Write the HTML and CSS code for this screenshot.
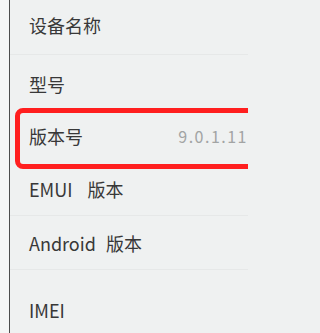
FILE: index.html
```html
<!DOCTYPE html>
<html lang="zh-CN">
<head>
<meta charset="utf-8">
<title>关于手机</title>
<link rel="stylesheet" href="styles.css">
</head>
<body>
<div class="screen">
  <div class="edge"></div>
  <div class="list">
    <div class="row row-1"><span class="label">设备名称</span></div>
    <div class="row row-2"><span class="label">型号</span></div>
    <div class="row row-3">
      <span class="label">版本号</span>
      <span class="value">9.0.1.11</span>
      <div class="highlight"></div>
    </div>
    <div class="row row-4"><span class="label">EMUI<span class="gap-wide"></span>版本</span></div>
    <div class="row row-5"><span class="label">Android<span class="gap"></span>版本</span></div>
    <div class="row row-6"><span class="label">IMEI</span></div>
  </div>
</div>
</body>
</html>
```

FILE: styles.css
```css
html, body {
  margin: 0;
  padding: 0;
  background: #eff1f1;
}

.screen {
  display: flex;
  width: 248px;
  height: 333px;
  overflow: hidden;
  font-family: "Noto Sans CJK SC", "Noto Sans", sans-serif;
  color: #383838;
  background: #eff1f1;
}

.edge {
  flex: 0 0 9px;
  background: #f5f6f6;
  border-right: 1px solid #4d4d4d;
}

.list {
  flex: 0 0 238px;
  display: flex;
  flex-direction: column;
}

.row {
  position: relative;
  display: flex;
  align-items: center;
  padding-left: 19px;
  padding-right: 0;
  box-sizing: border-box;
  border-bottom: 1px solid #e6e8e8;
}

.label {
  font-size: 18px;
  line-height: 24px;
  white-space: nowrap;
  display: flex;
  align-items: center;
}

.gap { display: inline-block; width: 10px; }
.gap-wide { display: inline-block; width: 15px; }

.row-1 { height: 55px; padding-bottom: 5px; }
.row-2 { height: 54px; padding-top: 4px; border-bottom-color: transparent; }
.row-3 { height: 54px; padding-top: 1px; border-bottom-color: transparent; }
.row-4 { height: 53px; }
.row-5 { height: 54px; }
.row-6 { flex: 1; align-items: flex-start; padding-top: 28px; border-bottom: none; }

.value {
  margin-left: auto;
  font-size: 16px;
  line-height: 24px;
  letter-spacing: 1.5px;
  color: #a2a4a4;
  white-space: nowrap;
}

.highlight {
  position: absolute;
  left: 5px;
  top: -1px;
  width: 300px;
  height: 61px;
  box-sizing: border-box;
  border: 5px solid #ff1f1f;
  border-radius: 8px;
}
```
